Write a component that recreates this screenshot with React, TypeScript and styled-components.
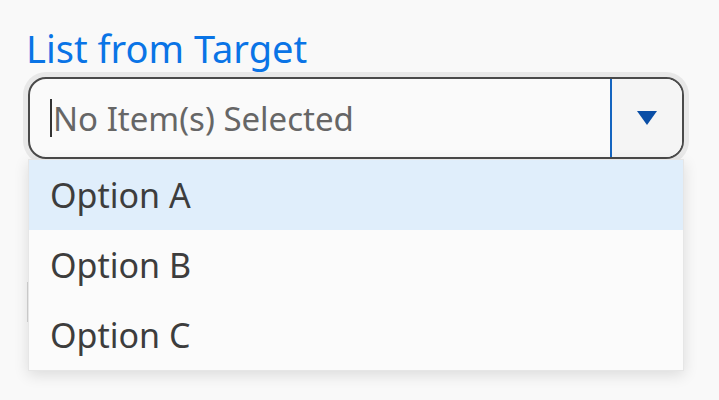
import React from "react";
import styled, { createGlobalStyle } from "styled-components";

const GlobalStyle = createGlobalStyle`
  html, body {
    margin: 0;
    padding: 0;
    background: #f9f9f9;
    font-family: "Noto Sans", "Open Sans", sans-serif;
  }
`;

const Page = styled.div`
  display: flex;
  flex-direction: column;
  box-sizing: border-box;
  min-height: 400px;
  padding: 26px 0 0 23px;
  width: 689px;
`;

const Label = styled.label`
  font-size: 38px;
  line-height: 44px;
  color: #0a74e6;
  padding-left: 3px;
  margin-bottom: 2px;
`;

const SelectWrap = styled.div`
  position: relative;
  padding: 5px;
`;

const Control = styled.div`
  display: flex;
  height: 78px;
  border: 2px solid #4a4a4a;
  border-radius: 18px;
  background: #fafafa;
  box-shadow: 0 0 0 5px #e8e8e8;
  overflow: hidden;
`;

const Field = styled.div`
  flex: 1;
  display: flex;
  align-items: center;
  padding-left: 20px;
  border-right: 2px solid #1565c0;
`;

const Caret = styled.span`
  width: 2px;
  height: 38px;
  background: #333;
  margin-right: 1px;
`;

const Placeholder = styled.span`
  font-size: 33px;
  color: #666;
`;

const ToggleButton = styled.div`
  width: 70px;
  display: flex;
  align-items: center;
  justify-content: center;
  background: #f5f5f5;
`;

const Menu = styled.ul`
  position: absolute;
  top: 87px;
  left: 5px;
  right: 5px;
  margin: 0;
  padding: 0;
  list-style: none;
  background: #fbfbfb;
  border: 1px solid #e6e6e6;
  box-shadow: 0 4px 14px rgba(0, 0, 0, 0.12);
  z-index: 2;
`;

const Item = styled.li<{ $active?: boolean }>`
  height: 70px;
  display: flex;
  align-items: center;
  padding-left: 21px;
  font-size: 34px;
  color: #3d3d3d;
  background: ${(p) => (p.$active ? "#e0eefb" : "transparent")};
`;

const Behind = styled.div`
  height: 40px;
  margin: 118px 5px 0 4px;
  border-left: 2px solid #d4d4d4;
  border-right: 2px solid #d4d4d4;
`;

export default function App() {
  return (
    <>
      <GlobalStyle />
      <Page>
        <Label>List from Target</Label>
        <SelectWrap>
          <Control>
            <Field>
              <Caret />
              <Placeholder>No Item(s) Selected</Placeholder>
            </Field>
            <ToggleButton>
              <svg width="20" height="14" viewBox="0 0 20 14">
                <polygon points="0,0 20,0 10,14" fill="#0a4ea6" />
              </svg>
            </ToggleButton>
          </Control>
          <Menu>
            <Item $active>Option A</Item>
            <Item>Option B</Item>
            <Item>Option C</Item>
          </Menu>
        </SelectWrap>
        <Behind />
      </Page>
    </>
  );
}
